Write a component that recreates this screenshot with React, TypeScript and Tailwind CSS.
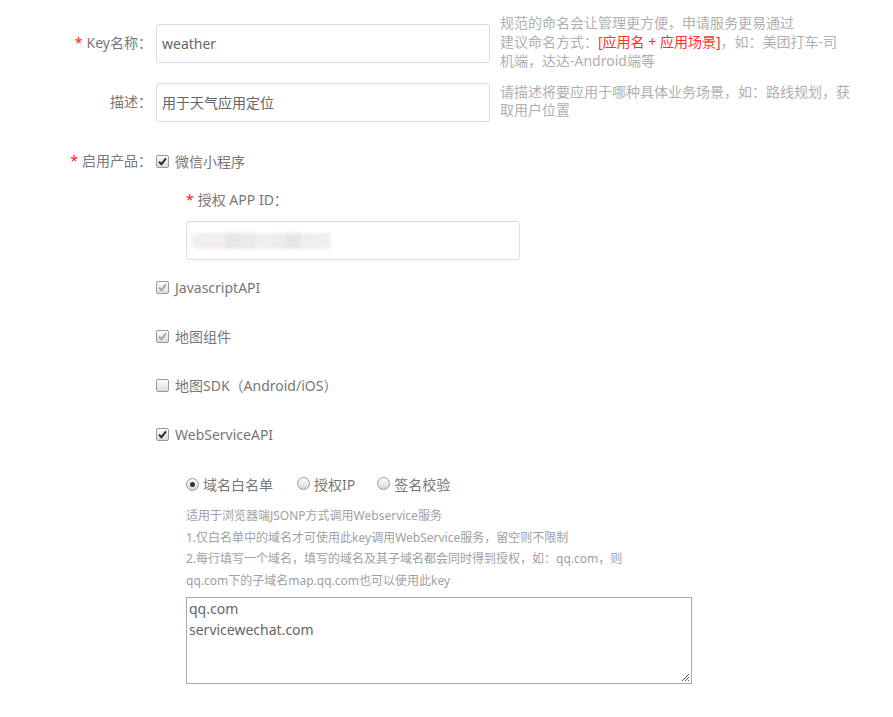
import React from 'react';

const font = { fontFamily: '"Noto Sans", "Noto Sans CJK SC", sans-serif' };

function Box({ checked, dim }: { checked?: boolean; dim?: boolean }) {
  return (
    <span className="inline-flex items-center justify-center w-[13px] h-[13px] border border-[#9a9a9a] rounded-[2px] bg-gradient-to-b from-[#fdfdfd] to-[#dcdcdc] shrink-0">
      {checked && (
        <svg width="9" height="9" viewBox="0 0 9 9">
          <path d="M1 4.6 L3.4 7.2 L8 1.4" fill="none" stroke={dim ? '#a8a8a8' : '#2b2b2b'} strokeWidth="2" />
        </svg>
      )}
    </span>
  );
}

function Radio({ on }: { on?: boolean }) {
  return (
    <span className="inline-flex items-center justify-center w-[13px] h-[13px] rounded-full border border-[#9a9a9a] bg-gradient-to-b from-[#fdfdfd] to-[#d6d6d6] shrink-0">
      {on && <span className="w-[5px] h-[5px] rounded-full bg-[#333]" />}
    </span>
  );
}

const Star = () => <span className="text-[#ff1a1a] mr-[4px]">*</span>;

const products = [
  { name: 'JavascriptAPI', checked: true, dim: true },
  { name: '地图组件', checked: true, dim: true },
  { name: '地图SDK（Android/iOS）', checked: false, dim: false },
  { name: 'WebServiceAPI', checked: true, dim: false },
];

export default function App() {
  return (
    <div style={font} className="w-[893px] h-[717px] bg-white overflow-hidden text-[14px] text-[#777] pt-[13px]">
      {/* key name */}
      <div className="flex items-start">
        <div className="w-[152px] mt-[11px] text-right leading-[38px]">
          <Star />Key名称：
        </div>
        <div className="ml-[4px] mt-[11px] w-[334px] h-[39px] border border-[#dcdce6] rounded-[3px] px-[5px] leading-[37px] text-[#666]">
          weather
        </div>
        <div className="ml-[10px] text-[#b0b0b0] leading-[19px] whitespace-nowrap">
          规范的命名会让管理更方便，申请服务更易通过<br />
          建议命名方式：<span className="text-[#ff3030]">[应用名 + 应用场景]</span>，如：美团打车-司<br />
          机端，达达-Android端等
        </div>
      </div>

      {/* description */}
      <div className="flex items-start mt-[13px]">
        <div className="w-[152px] text-right leading-[38px]">描述：</div>
        <div className="ml-[4px] w-[334px] h-[39px] border border-[#dcdce6] rounded-[3px] px-[5px] leading-[37px] text-[#666]">
          用于天气应用定位
        </div>
        <div className="ml-[10px] text-[#b0b0b0] leading-[18px] whitespace-nowrap">
          请描述将要应用于哪种具体业务场景，如：路线规划，获<br />
          取用户位置
        </div>
      </div>

      {/* products */}
      <div className="flex items-start mt-[29px]">
        <div className="w-[152px] text-right leading-[20px]">
          <Star />启用产品：
        </div>
        <div className="ml-[4px] flex-1">
          <div className="flex items-center h-[20px] gap-[6px]">
            <Box checked />
            <span>微信小程序</span>
          </div>

          <div className="ml-[30px] mt-[19px] leading-[20px]">
            <Star />授权 APP ID：
          </div>
          <div className="ml-[30px] mt-[11px] w-[334px] h-[39px] border border-[#dcdce6] rounded-[3px] flex items-center pl-[4px]">
            <div className="flex h-[16px] blur-[1.5px] opacity-80">
              <span className="w-[14px] bg-[#ececec] rounded-l-full" />
              <span className="w-[20px] bg-[#f0eceb]" />
              <span className="w-[16px] bg-[#dde2e6]" />
              <span className="w-[14px] bg-[#e8e3e1]" />
              <span className="w-[16px] bg-[#efeae8]" />
              <span className="w-[14px] bg-[#e6e8ea]" />
              <span className="w-[16px] bg-[#dde2e6]" />
              <span className="w-[14px] bg-[#ebebeb]" />
              <span className="w-[16px] bg-[#eeeceb]" />
            </div>
          </div>

          <div className="mt-[17px] flex flex-col gap-[29px]">
            {products.map((p) => (
              <div key={p.name} className="flex items-center h-[20px] gap-[6px]">
                <Box checked={p.checked} dim={p.dim} />
                <span>{p.name}</span>
              </div>
            ))}
          </div>

          {/* web service options */}
          <div className="ml-[30px] mt-[30px]">
            <div className="flex items-center h-[20px]">
              <Radio on />
              <span className="ml-[4px]">域名白名单</span>
              <span className="ml-[24px]"><Radio /></span>
              <span className="ml-[4px]">授权IP</span>
              <span className="ml-[22px]"><Radio /></span>
              <span className="ml-[4px]">签名校验</span>
            </div>
            <div className="mt-[11px] text-[12px] leading-[21.6px] text-[#a0a0a0] whitespace-nowrap">
              适用于浏览器端JSONP方式调用Webservice服务<br />
              1.仅白名单中的域名才可使用此key调用WebService服务，留空则不限制<br />
              2.每行填写一个域名，填写的域名及其子域名都会同时得到授权，如：qq.com，则<br />
              qq.com下的子域名map.qq.com也可以使用此key
            </div>
            <div className="relative mt-[6px] w-[506px] h-[87px] border border-[#a9a9a9] px-[2px] leading-[21px] text-[#666]">
              qq.com<br />
              servicewechat.com
              <svg className="absolute right-[1px] bottom-[1px]" width="9" height="9" viewBox="0 0 9 9">
                <path d="M8 1 L1 8 M8 4 L4 8 M8 7 L7 8" stroke="#555" strokeWidth="1" />
              </svg>
            </div>
          </div>
        </div>
      </div>
    </div>
  );
}
